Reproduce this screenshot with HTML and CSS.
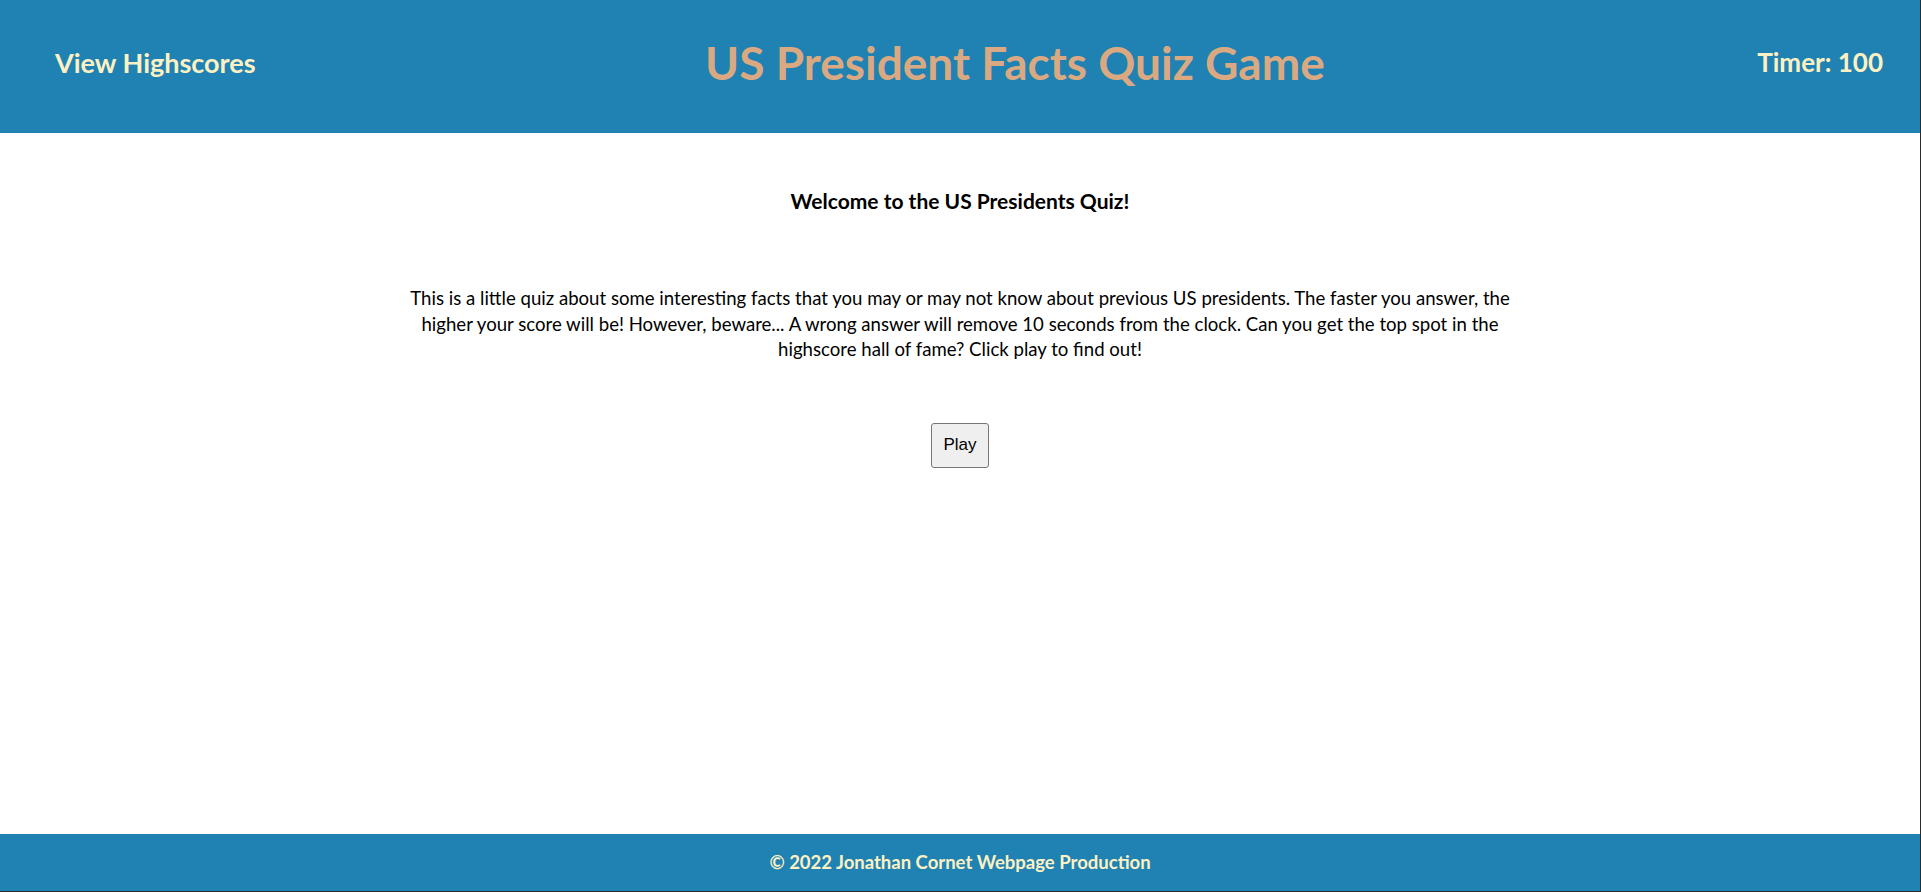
FILE: index.html
```html
<!DOCTYPE html>
<html lang="en">
<head>
<meta charset="utf-8">
<title>US President Facts Quiz Game</title>
<link rel="stylesheet" href="styles.css">
</head>
<body>
<div class="page">
  <header class="topbar">
    <a class="highscores" href="#">View Highscores</a>
    <h1 class="title">US President Facts Quiz Game</h1>
    <div class="timer">Timer: 100</div>
  </header>
  <main class="content">
    <h2 class="welcome">Welcome to the US Presidents Quiz!</h2>
    <p class="intro">This is a little quiz about some interesting facts that you may or may not know about previous US presidents. The faster you answer, the higher your score will be! However, beware... A wrong answer will remove 10 seconds from the clock. Can you get the top spot in the highscore hall of fame? Click play to find out!</p>
    <button class="play" type="button">Play</button>
  </main>
  <footer class="bottombar">© 2022 Jonathan Cornet Webpage Production</footer>
</div>
</body>
</html>
```

FILE: styles.css
```css
html, body {
  margin: 0;
  padding: 0;
  height: 100%;
  background: #2b2b2b;
}

.page {
  box-sizing: border-box;
  width: 1920px;
  height: 891px;
  display: flex;
  flex-direction: column;
  background: #ffffff;
  font-family: Lato, "Noto Sans", sans-serif;
}

.topbar {
  height: 133px;
  flex: 0 0 133px;
  background: #1f82b2;
  display: flex;
  align-items: center;
  justify-content: space-between;
  padding: 0 37px 9px 55px;
  box-sizing: border-box;
}

.highscores {
  color: #fdf1c3;
  text-decoration: none;
  font-weight: 700;
  font-size: 27px;
}

.title {
  margin: 0 0 0 17px;
  color: #daa982;
  font-weight: 700;
  font-size: 46px;
}

.timer {
  color: #fdf1c3;
  font-weight: 700;
  font-size: 26px;
}

.content {
  flex: 1;
  display: flex;
  flex-direction: column;
  align-items: center;
}

.welcome {
  margin: 55px 0 0;
  font-size: 21px;
  line-height: 25px;
  font-weight: 700;
  color: #000;
}

.intro {
  margin: 73px 0 0;
  width: 1120px;
  text-align: center;
  font-size: 18.6px;
  line-height: 25.5px;
  color: #000;
}

.play {
  margin-top: 60px;
  width: 58px;
  height: 45px;
  font-family: Arial, "Liberation Sans", sans-serif;
  font-size: 17px;
  color: #000;
  background: #efefef;
  border: 1px solid #767676;
  border-radius: 3px;
  padding: 0;
}

.bottombar {
  height: 57px;
  flex: 0 0 57px;
  background: #1f82b2;
  color: #fdf1c3;
  font-weight: 700;
  font-size: 18.5px;
  display: flex;
  align-items: center;
  justify-content: center;
  padding-bottom: 1px;
  box-sizing: border-box;
}
```
